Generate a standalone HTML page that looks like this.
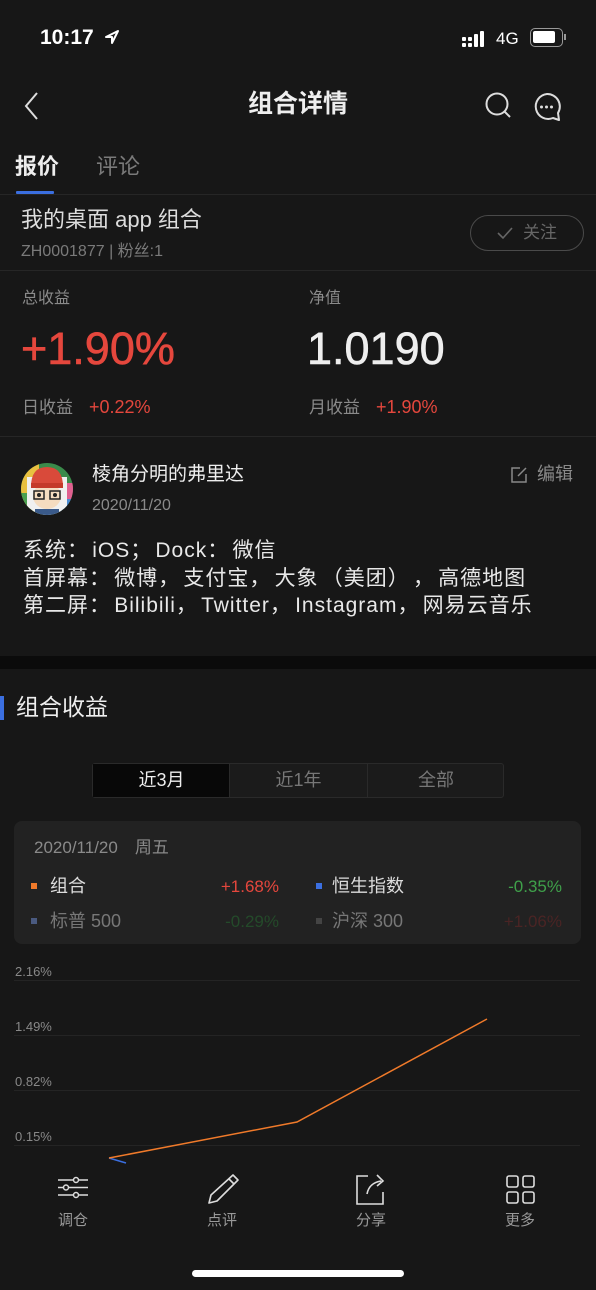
<!DOCTYPE html>
<html><head><meta charset="utf-8"><style>
*{margin:0;padding:0;box-sizing:border-box}
body{width:596px;height:1290px;background:#171717;position:relative;overflow:hidden;font-family:"Liberation Sans","Noto Sans CJK SC",sans-serif;color:#e8e8e8}
.a{position:absolute;white-space:nowrap;line-height:1}
.g{color:#8a8a8a}
.r{color:#e5473d}
.hr{position:absolute;left:0;width:596px;height:1px;background:#262626}
.p{display:inline-block;width:1.2em;text-align:left}
.pr{display:inline-block;width:1.2em;text-align:right}
</style></head><body>
<div class="a" style="left:40px;top:27px;font-size:21px;font-weight:bold;color:#fff">10:17</div>
<svg class="a" style="left:104px;top:29px" width="16" height="16" viewBox="0 0 16 16"><path d="M14 2 L2 8 L8 8 L8 14 Z" fill="none" stroke="#fff" stroke-width="2" stroke-linejoin="round"/></svg>
<svg class="a" style="left:461px;top:30px" width="28" height="18" viewBox="0 0 28 18"><g fill="#fff"><rect x="1" y="7" width="4" height="4" rx="1"/><rect x="1" y="13" width="4" height="4" rx="1"/><rect x="7" y="7" width="4" height="4" rx="1"/><rect x="7" y="13" width="4" height="4" rx="1"/><rect x="13" y="4" width="4" height="13" rx="1"/><rect x="19" y="1" width="4" height="16" rx="1"/></g></svg>
<div class="a" style="left:496px;top:30px;font-size:17px;color:#fff">4G</div>
<div class="a" style="left:530px;top:28px;width:33px;height:19px;border:1.5px solid #999;border-radius:5px"><div style="position:absolute;left:2px;top:2px;width:22px;height:12px;background:#fff;border-radius:2px"></div></div>
<div class="a" style="left:564px;top:34px;width:2px;height:6px;background:#999"></div>

<svg class="a" style="left:22px;top:90px" width="20" height="32" viewBox="0 0 20 32"><path d="M15 3 L4 16 L15 29" fill="none" stroke="#ddd" stroke-width="2"/></svg>
<div class="a" style="left:0;width:596px;text-align:center;top:92px;font-size:25px;font-weight:bold;color:#eee">组合详情</div>
<svg class="a" style="left:484px;top:91px" width="30" height="30" viewBox="0 0 30 30"><circle cx="13" cy="13" r="10.5" fill="none" stroke="#ddd" stroke-width="2"/><path d="M20 20 L26 26" stroke="#ddd" stroke-width="2"/></svg>
<svg class="a" style="left:531px;top:91px" width="32" height="32" viewBox="0 0 32 32"><path d="M16 3 A12.5 12.5 0 1 0 22 27 L28 29 L27 22 A12.5 12.5 0 0 0 16 3 Z" fill="none" stroke="#ddd" stroke-width="2" stroke-linejoin="round"/><circle cx="10.5" cy="16" r="1.5" fill="#ddd"/><circle cx="15.5" cy="16" r="1.5" fill="#ddd"/><circle cx="20.5" cy="16" r="1.5" fill="#ddd"/></svg>

<div class="a" style="left:15px;top:156px;font-size:22px;font-weight:bold;color:#eee">报价</div>
<div class="a g" style="left:96px;top:156px;font-size:22px;color:#7a7a7a">评论</div>
<div class="a" style="left:16px;top:191px;width:38px;height:3px;background:#3b6fe0;border-radius:1px"></div>
<div class="hr" style="top:194px"></div>

<div class="a" style="left:21px;top:209px;font-size:22px;color:#ddd">我的桌面 app 组合</div>
<div class="a g" style="left:21px;top:244px;font-size:16px;color:#7a7a7a">ZH0001877 | 粉丝:1</div>
<div class="a" style="left:470px;top:215px;width:114px;height:36px;border:1.5px solid #4a4a4a;border-radius:18px"></div>
<svg class="a" style="left:496px;top:226px" width="18" height="14" viewBox="0 0 18 14"><path d="M2 7 L7 12 L16 2" fill="none" stroke="#666" stroke-width="1.6"/></svg>
<div class="a" style="left:523px;top:224px;font-size:17px;color:#666">关注</div>
<div class="hr" style="top:270px"></div>

<div class="a g" style="left:22px;top:291px;font-size:16px">总收益</div>
<div class="a g" style="left:309px;top:291px;font-size:16px">净值</div>
<div class="a r" style="left:21px;top:326px;font-size:45px;-webkit-text-stroke:0.6px #e5473d">+1.90%</div>
<div class="a" style="left:307px;top:326px;font-size:45px;color:#eee;-webkit-text-stroke:0.6px #eee">1.0190</div>
<div class="a g" style="left:22px;top:399px;font-size:17px">日收益</div>
<div class="a r" style="left:89px;top:398px;font-size:18px">+0.22%</div>
<div class="a g" style="left:309px;top:399px;font-size:17px">月收益</div>
<div class="a r" style="left:376px;top:398px;font-size:18px">+1.90%</div>
<div class="hr" style="top:436px"></div>

<svg class="a" style="left:21px;top:463px" width="52" height="52" viewBox="0 0 52 52"><defs><clipPath id="c"><circle cx="26" cy="26" r="26"/></clipPath></defs><g clip-path="url(#c)"><rect width="52" height="52" fill="#3a8a4a"/><rect x="0" y="0" width="18" height="52" fill="#e8c040"/><rect x="0" y="30" width="14" height="22" fill="#4aa050"/><rect x="38" y="20" width="14" height="16" fill="#e06090"/><rect x="34" y="36" width="18" height="16" fill="#4a8ad0"/><rect x="6" y="14" width="40" height="38" fill="#f0f0f0"/><ellipse cx="26" cy="33" rx="14" ry="13" fill="#f5dcc0"/><path d="M10 24 Q10 4 26 4 Q42 4 42 24 Z" fill="#d94a3a"/><rect x="10" y="20" width="32" height="5" fill="#c43a2a"/><rect x="13" y="28" width="10" height="8" fill="none" stroke="#222" stroke-width="1.5"/><rect x="29" y="28" width="10" height="8" fill="none" stroke="#222" stroke-width="1.5"/><circle cx="18" cy="32" r="2" fill="#222"/><circle cx="34" cy="32" r="2" fill="#222"/><rect x="14" y="46" width="24" height="6" fill="#3a5a8a"/></g></svg>
<div class="a" style="left:92px;top:465px;font-size:19px;color:#eee">棱角分明的弗里达</div>
<div class="a g" style="left:92px;top:498px;font-size:16px">2020/11/20</div>
<svg class="a" style="left:510px;top:466px" width="18" height="18" viewBox="0 0 18 18"><path d="M10 2 H2 V16 H16 V8" fill="none" stroke="#888" stroke-width="1.5"/><path d="M8 10 L16 2" stroke="#888" stroke-width="1.5"/></svg>
<div class="a g" style="left:537px;top:465px;font-size:18px">编辑</div>
<div class="a" style="left:23px;top:537px;font-size:21px;line-height:27.5px;letter-spacing:1px;color:#e8e8e8">系统<span class="p">：</span>iOS<span class="p">；</span>Dock<span class="p">：</span>微信<br>首屏幕<span class="p">：</span>微博<span class="p">，</span>支付宝<span class="p">，</span>大象<span class="pr">（</span>美团<span class="p">）</span><span class="p">，</span>高德地图<br>第二屏<span class="p">：</span>Bilibili<span class="p">，</span>Twitter<span class="p">，</span>Instagram<span class="p">，</span>网易云音乐</div>

<div class="a" style="left:0;top:656px;width:596px;height:13px;background:#0b0b0b"></div>
<div class="a" style="left:0;top:696px;width:4px;height:24px;background:#3b6fe0"></div>
<div class="a" style="left:16px;top:696px;font-size:23px;color:#eee">组合收益</div>

<div class="a" style="left:92px;top:763px;width:412px;height:35px;border:1px solid #2a2a2a;border-radius:3px;background:#1b1b1b"></div>
<div class="a" style="left:93px;top:764px;width:137px;height:33px;background:#080808"></div>
<div class="a" style="left:229px;top:764px;width:1px;height:33px;background:#2a2a2a"></div>
<div class="a" style="left:367px;top:764px;width:1px;height:33px;background:#2a2a2a"></div>
<div class="a" style="left:93px;top:771px;width:137px;text-align:center;font-size:18px;color:#eee">近3月</div>
<div class="a g" style="left:230px;top:771px;width:137px;text-align:center;font-size:18px;color:#777">近1年</div>
<div class="a g" style="left:368px;top:771px;width:136px;text-align:center;font-size:18px;color:#777">全部</div>

<div class="a" style="left:14px;top:821px;width:567px;height:123px;background:#222;border-radius:8px"></div>
<div class="a g" style="left:34px;top:839px;font-size:17px">2020/11/20　周五</div>
<div class="a" style="left:31px;top:883px;width:6px;height:6px;background:#f07a2a"></div>
<div class="a" style="left:50px;top:877px;font-size:18px;color:#ddd">组合</div>
<div class="a r" style="left:0;width:279px;text-align:right;top:878px;font-size:17px">+1.68%</div>
<div class="a" style="left:316px;top:883px;width:6px;height:6px;background:#3b6fe0"></div>
<div class="a" style="left:332px;top:877px;font-size:18px;color:#ddd">恒生指数</div>
<div class="a" style="left:0;width:562px;text-align:right;top:878px;font-size:17px;color:#3fa04a">-0.35%</div>
<div class="a" style="left:31px;top:918px;width:6px;height:6px;background:#4a5a80"></div>
<div class="a" style="left:50px;top:912px;font-size:18px;color:#777">标普 500</div>
<div class="a" style="left:0;width:279px;text-align:right;top:913px;font-size:17px;color:#244a2a">-0.29%</div>
<div class="a" style="left:316px;top:918px;width:6px;height:6px;background:#444"></div>
<div class="a" style="left:332px;top:912px;font-size:18px;color:#777">沪深 300</div>
<div class="a" style="left:0;width:562px;text-align:right;top:913px;font-size:17px;color:#4a2424">+1.06%</div>

<div class="a g" style="left:15px;top:965px;font-size:13px;color:#888">2.16%</div>
<div class="a g" style="left:15px;top:1020px;font-size:13px;color:#888">1.49%</div>
<div class="a g" style="left:15px;top:1075px;font-size:13px;color:#888">0.82%</div>
<div class="a g" style="left:15px;top:1130px;font-size:13px;color:#888">0.15%</div>
<svg class="a" style="left:0;top:960px" width="596" height="210" viewBox="0 960 596 210"><g stroke="#242424" stroke-width="1"><path d="M14 980.5H580M14 1035.5H580M14 1090.5H580M14 1145.5H580"/></g><path d="M109 1158 L126 1163" stroke="#3b6fe0" stroke-width="1.5"/><path d="M109 1158 L297 1122 L487 1019" fill="none" stroke="#f07a2a" stroke-width="1.5"/></svg>

<svg class="a" style="left:57px;top:1175px" width="32" height="30" viewBox="0 0 32 30"><g fill="none" stroke="#ddd" stroke-width="1.5"><path d="M1 5H16M22 5H31M1 12.5H6M12 12.5H31M1 20H16M22 20H31"/><circle cx="19" cy="5" r="2.5"/><circle cx="9" cy="12.5" r="2.5"/><circle cx="19" cy="20" r="2.5"/></g></svg>
<svg class="a" style="left:206px;top:1173px" width="34" height="32" viewBox="0 0 34 32"><path d="M27 2 L32 7 L11 28 L3 30 L5 22 Z M23 6 L28 11" fill="none" stroke="#ddd" stroke-width="1.6" stroke-linejoin="round"/></svg>
<svg class="a" style="left:355px;top:1172px" width="34" height="34" viewBox="0 0 34 34"><path d="M13 4 H2 V32 H28 V20" fill="none" stroke="#ddd" stroke-width="1.6"/><path d="M12 22 Q14 11 26 9 M22 3 L28 9 L22 14" fill="none" stroke="#ddd" stroke-width="1.6"/></svg>
<svg class="a" style="left:506px;top:1175px" width="30" height="30" viewBox="0 0 30 30"><g fill="none" stroke="#ddd" stroke-width="1.6"><rect x="1" y="1" width="11" height="11" rx="2"/><rect x="17" y="1" width="11" height="11" rx="2"/><rect x="1" y="17" width="11" height="11" rx="2"/><rect x="17" y="17" width="11" height="11" rx="2"/></g></svg>
<div class="a g" style="left:58px;top:1213px;font-size:15px;color:#999">调仓</div>
<div class="a g" style="left:207px;top:1213px;font-size:15px;color:#999">点评</div>
<div class="a g" style="left:356px;top:1213px;font-size:15px;color:#999">分享</div>
<div class="a g" style="left:505px;top:1213px;font-size:15px;color:#999">更多</div>
<div class="a" style="left:192px;top:1270px;width:212px;height:7px;background:#fff;border-radius:4px"></div>
</body></html>
